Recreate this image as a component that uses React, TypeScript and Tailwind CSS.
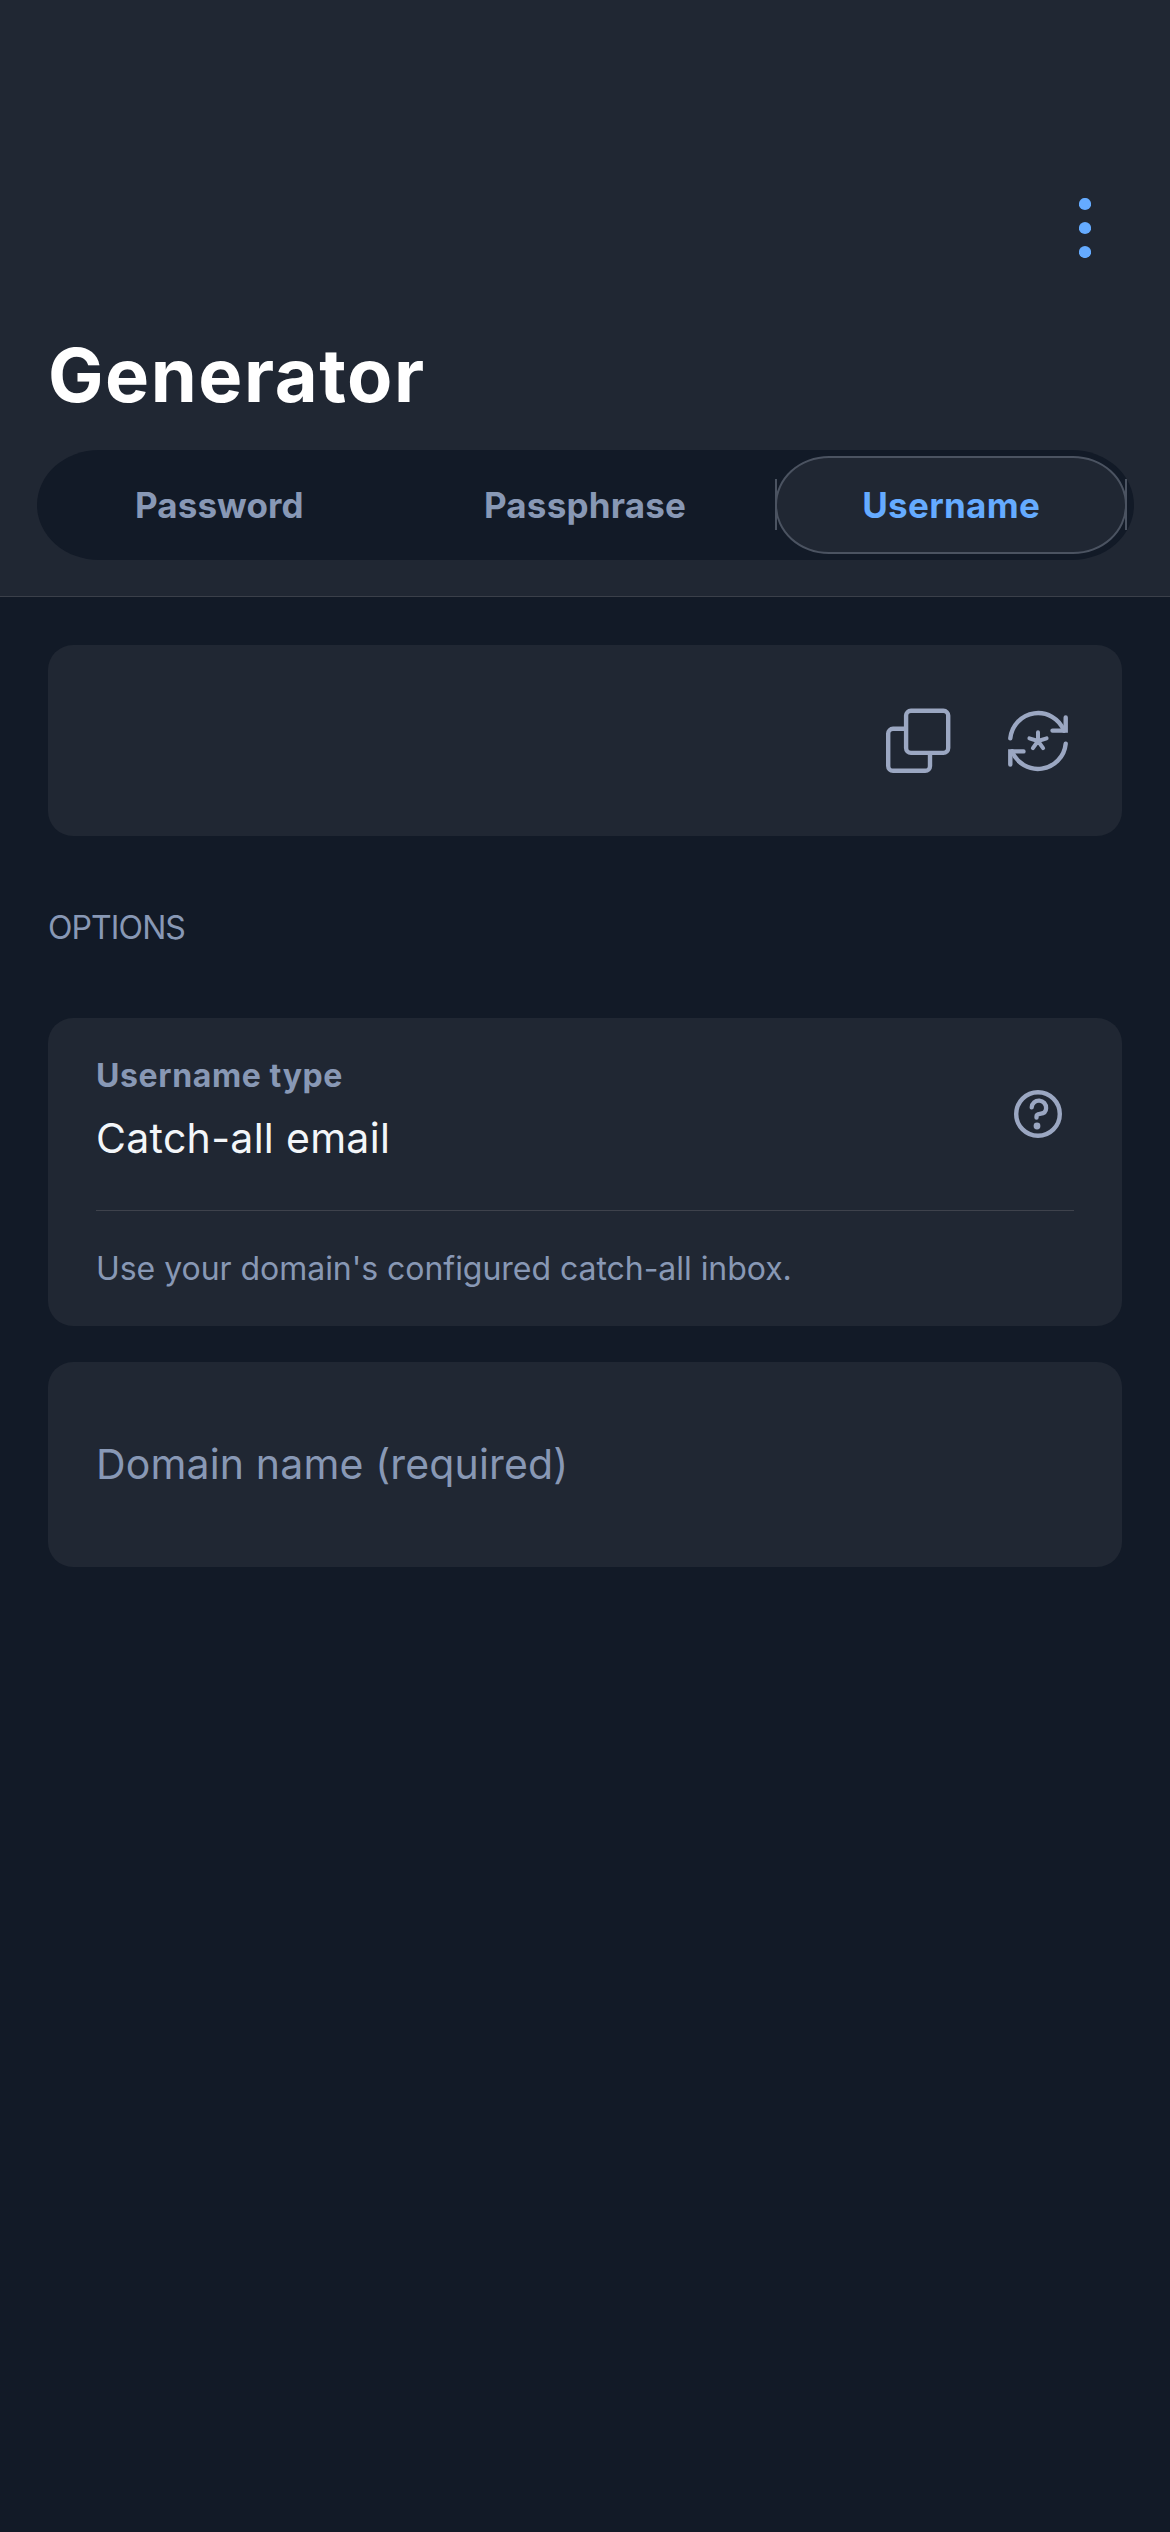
import React from 'react';

function MoreIcon() {
  return (
    <svg className="h-[60px] w-3 fill-[#65abff]" viewBox="0 0 12 60">
      <circle cx="6" cy="6" r="6.1" />
      <circle cx="6" cy="30" r="6.1" />
      <circle cx="6" cy="54" r="6.1" />
    </svg>
  );
}

function CopyIcon() {
  return (
    <svg className="h-[69px] w-[69px]" viewBox="0 0 69 69" fill="none" stroke="currentColor" strokeWidth="4.4">
      <rect x="22.1" y="4.8" width="42.1" height="42.1" rx="4.8" />
      <path d="M21 22.8H9a4.8 4.8 0 0 0-4.8 4.8V60A4.8 4.8 0 0 0 9 64.8h32.2A4.8 4.8 0 0 0 46 60V48" />
    </svg>
  );
}

function RegenerateIcon() {
  return (
    <svg className="h-16 w-16" viewBox="0 0 64 64" fill="none" stroke="currentColor" strokeWidth="4.4" strokeLinecap="round">
      <path d="M4.3 29.3A27.9 27.9 0 0 1 58 21.7" />
      <path d="M59.7 8.4v13.2H46.5" />
      <path d="M59.7 34.7A27.9 27.9 0 0 1 6 42.3" />
      <path d="M4.3 55.6V42.4h13.2" />
      <path strokeWidth="4" d="M32 32v-8.8M32 32l-8.6-2.7M32 32l8.6-2.7M32 32l-5.1 7.1M32 32l5.1 7.1" />
    </svg>
  );
}

function HelpIcon() {
  return (
    <svg className="h-12 w-12" viewBox="0 0 48 48" fill="none" stroke="currentColor" strokeWidth="4.4" strokeLinecap="round">
      <circle cx="24" cy="24" r="21.8" />
      <path strokeWidth="4.3" d="M17.7 17.3a7.2 7.2 0 0 1 14.4.9c0 3.7-2.9 5.3-6.2 5.6-2.2.2-3.4 1-3.4 2.6v1.3" />
      <circle cx="23" cy="36" r="3.4" fill="currentColor" stroke="none" />
    </svg>
  );
}

export default function App() {
  return (
    <div className="flex h-[2532px] w-[1170px] flex-col overflow-hidden bg-[#121a27] font-['Inter',sans-serif] text-[#8898b5]">
      <header className="flex h-[597px] flex-col border-b border-[#3b404a] bg-[#202733] pt-[198px]">
        <div className="flex justify-end pr-[79px]">
          <button className="block" aria-label="More">
            <MoreIcon />
          </button>
        </div>
        <h1 className="mt-[81px] pl-12 text-[74px] leading-[72px] font-bold tracking-[1.55px] text-white">Generator</h1>
        <nav className="mx-[36.5px] mt-[39px] grid h-[110px] grid-cols-3 rounded-[62px/55px] bg-[#121a27] text-[35px] font-bold">
          <button className="tracking-[0.1px]">Password</button>
          <button className="tracking-[0.2px]">Passphrase</button>
          <button className="relative my-1.5 mr-1.5 ml-[7px] rounded-[54px/49px] border-2 border-[#4b5361] bg-[#202733] tracking-[0.3px] text-[#65abff]">
            <span className="absolute top-[21px] -left-[2px] h-[51px] w-[2px] bg-[#4b5361]" />
            Username
            <span className="absolute top-[21px] -right-[2px] h-[51px] w-[2px] bg-[#4b5361]" />
          </button>
        </nav>
      </header>

      <main className="flex flex-col px-12 pt-12">
        <section className="flex h-[191px] items-center justify-end gap-[53px] rounded-[25px] bg-[#202733] pr-[52px] text-[#9ba7c2]">
          <button className="block" aria-label="Copy">
            <CopyIcon />
          </button>
          <button className="block" aria-label="Regenerate">
            <RegenerateIcon />
          </button>
        </section>

        <h2 className="mt-[72px] text-[32px] leading-10 font-normal tracking-[-0.9px]">OPTIONS</h2>

        <section className="mt-[70px] h-[308px] rounded-[25px] bg-[#202733] px-12">
          <div className="flex h-[193px] justify-between border-b border-[#3e424c] pr-3">
            <div className="pt-[38px]">
              <div className="text-[32px] leading-10 font-bold tracking-[0.62px]">Username type</div>
              <div className="mt-[18px] text-[41px] leading-[48px] font-normal tracking-[0.3px] text-[#f3f6f9]">Catch-all email</div>
            </div>
            <button className="mt-[72px] h-12 text-[#9ba7c2]" aria-label="Help">
              <HelpIcon />
            </button>
          </div>
          <p className="mt-[38px] text-[32px] leading-10 font-normal tracking-[-0.04px] whitespace-nowrap">
            Use your domain's configured catch-all inbox.
          </p>
        </section>

        <section className="mt-9 flex h-[205px] items-center rounded-[25px] bg-[#202733] px-12 text-[41px] font-normal tracking-[0.15px]">
          Domain name (required)
        </section>
      </main>
    </div>
  );
}
